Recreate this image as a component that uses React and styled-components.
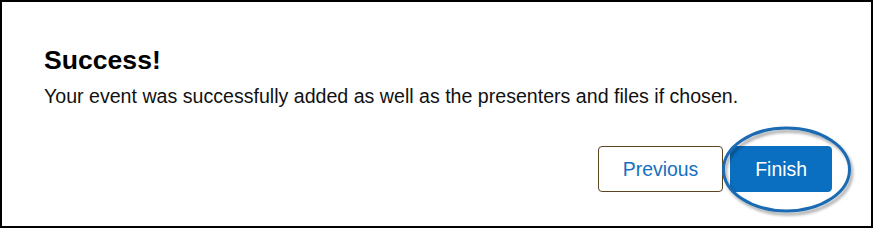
import React from "react";
import styled, { createGlobalStyle } from "styled-components";

const Global = createGlobalStyle`
  html, body { margin: 0; padding: 0; background: #ffffff; }
  body { font-family: "Liberation Sans", Arial, sans-serif; }
  * { box-sizing: border-box; }
`;

const Frame = styled.div`
  width: 873px;
  height: 228px;
  border: 2px solid #000000;
  background: #ffffff;
  padding: 43px 39px 0 42px;
  display: flex;
  flex-direction: column;
`;

const Title = styled.h2`
  margin: 0;
  font-size: 26.6px;
  line-height: 30px;
  font-weight: 700;
  color: #000000;
`;

const Message = styled.p`
  margin: 10px 0 0 0;
  font-size: 19.6px;
  line-height: 23px;
  color: #111111;
`;

const Actions = styled.div`
  margin-top: 38px;
  display: flex;
  justify-content: flex-end;
  gap: 7px;
`;

const Button = styled.button`
  height: 46px;
  padding: 0 24px;
  border-radius: 4px;
  font-family: "Liberation Sans", Arial, sans-serif;
  font-size: 19.4px;
  cursor: pointer;
  border: 1px solid ${(p) => (p.$primary ? "#0a6fc0" : "#5a4523")};
  background: ${(p) => (p.$primary ? "#0a6fc0" : "#ffffff")};
  color: ${(p) => (p.$primary ? "#ffffff" : "#1570be")};
`;

const Highlight = styled.span`
  position: relative;
  display: inline-flex;
`;

const Ring = styled.svg`
  position: absolute;
  left: -14px;
  top: -24px;
  width: 142px;
  height: 96px;
  overflow: visible;
  pointer-events: none;
`;

export default function App() {
  return (
    <>
      <Global />
      <Frame>
        <Title>Success!</Title>
        <Message>
          Your event was successfully added as well as the presenters and files if chosen.
        </Message>
        <Actions>
          <Button>Previous</Button>
          <Highlight>
            <Button $primary>Finish</Button>
            <Ring viewBox="0 0 142 96">
              <defs>
                <filter id="sh" x="-20%" y="-20%" width="140%" height="140%">
                  <feDropShadow dx="2" dy="3" stdDeviation="1.8" floodColor="#000" floodOpacity="0.35" />
                </filter>
              </defs>
              <ellipse
                cx="70.5"
                cy="47.5"
                rx="63"
                ry="41.5"
                fill="none"
                stroke="#1a6bb2"
                strokeWidth="3"
                filter="url(#sh)"
              />
            </Ring>
          </Highlight>
        </Actions>
      </Frame>
    </>
  );
}
